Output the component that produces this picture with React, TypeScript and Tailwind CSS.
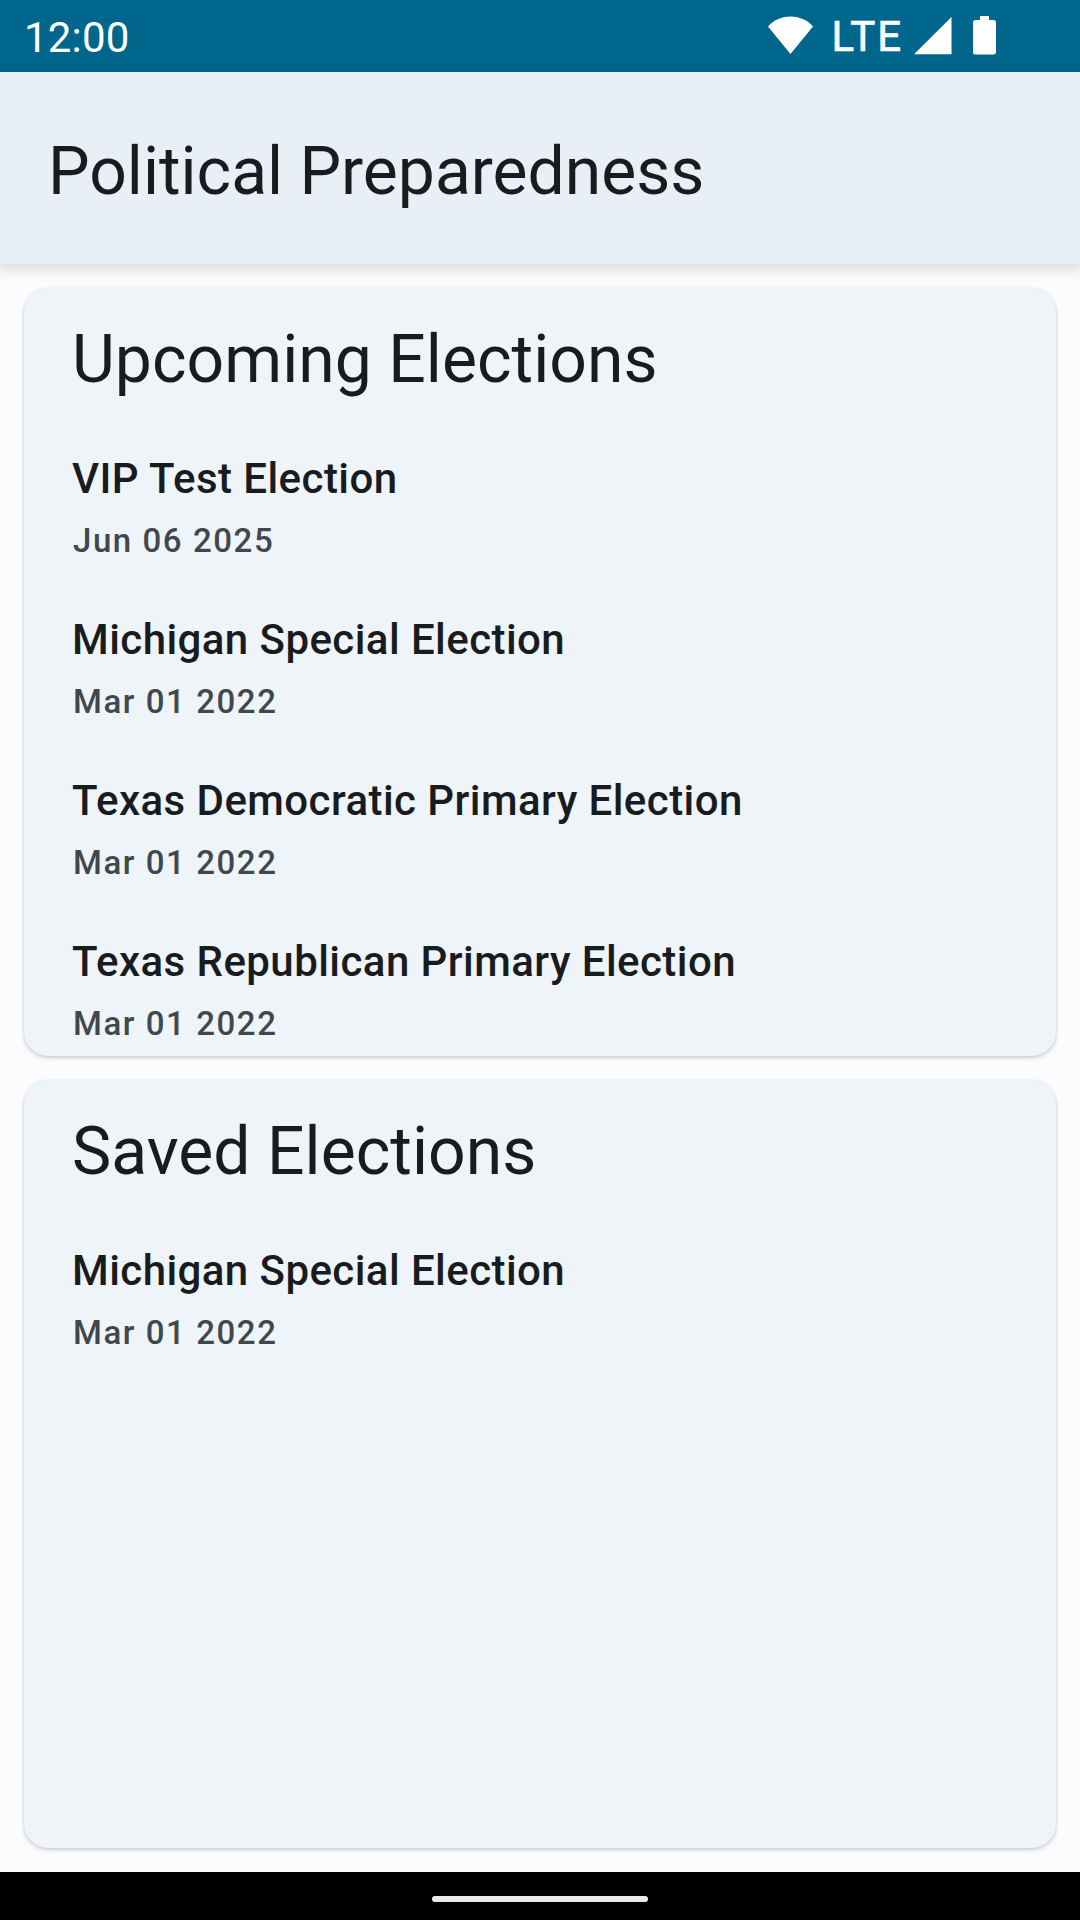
import React from "react";

type Election = { name: string; date: string };

const upcoming: Election[] = [
  { name: "VIP Test Election", date: "Jun 06 2025" },
  { name: "Michigan Special Election", date: "Mar 01 2022" },
  { name: "Texas Democratic Primary Election", date: "Mar 01 2022" },
  { name: "Texas Republican Primary Election", date: "Mar 01 2022" },
];

const saved: Election[] = [{ name: "Michigan Special Election", date: "Mar 01 2022" }];

function ElectionCard({ title, items }: { title: string; items: Election[] }) {
  return (
    <section className="h-[768px] shrink-0 overflow-hidden rounded-[24px] bg-[#eff4f8] px-12 pt-6 shadow-[0_2px_4px_rgba(0,0,0,0.18),0_0_2px_rgba(0,0,0,0.08)]">
      <h2 className="h-24 whitespace-nowrap text-[66px] leading-[96px] tracking-[0.05px] text-[#191c1e]">{title}</h2>
      <ul>
        {items.map((item) => (
          <li key={item.name} className="h-[161px] whitespace-nowrap pt-[38px] font-medium">
            <div className="h-[65px] text-[42px] leading-[66px] tracking-[0.43px] text-[#191c1e]">{item.name}</div>
            <div className="h-[58px] pl-px text-[33px] leading-[59px] tracking-[1.57px] text-[#41484d]">{item.date}</div>
          </li>
        ))}
      </ul>
    </section>
  );
}

export default function App() {
  return (
    <div className="flex h-[1920px] w-[1080px] flex-col overflow-hidden bg-[#fcfcff] font-[Roboto,sans-serif]">
      <div className="flex h-[72px] shrink-0 items-center bg-[#00668b] pl-6 text-white">
        <span className="pt-1 text-[42px] leading-[70px] tracking-[0.2px]">12:00</span>
        <svg className="ml-auto mr-[82px] h-[72px] w-[230px]" viewBox="768 0 230 72" fill="white">
          <path d="M768 26.5C780 13.3 801 13.3 813 26.5L790.5 54Z" />
          <text x="831.5" y="51" fontSize="42" letterSpacing="1.8" stroke="white" strokeWidth="0.7" fontFamily="Roboto">LTE</text>
          <path d="M951.5 17V54.3H914Z" />
          <path d="M980 16h9v4h4.500q2.500 0 2.500 2.500v29.500q0 2.500-2.500 2.500h-18q-2.500 0-2.500-2.500V22.500q0-2.500 2.500-2.500h4.500Z" />
        </svg>
      </div>
      <header className="z-10 flex h-48 shrink-0 items-center bg-[#e8eff6] pl-12 pt-2 shadow-[0_4px_12px_3px_rgba(0,0,0,0.12)]">
        <h1 className="text-[66px] leading-[84px] text-[#191c1e]">Political Preparedness</h1>
      </header>
      <main className="flex flex-1 flex-col gap-6 p-6">
        <ElectionCard title="Upcoming Elections" items={upcoming} />
        <ElectionCard title="Saved Elections" items={saved} />
      </main>
      <footer className="flex h-12 shrink-0 items-center justify-center bg-black pt-[6px]">
        <div className="h-[6px] w-[216px] rounded-full bg-[#ebebeb]" />
      </footer>
    </div>
  );
}
